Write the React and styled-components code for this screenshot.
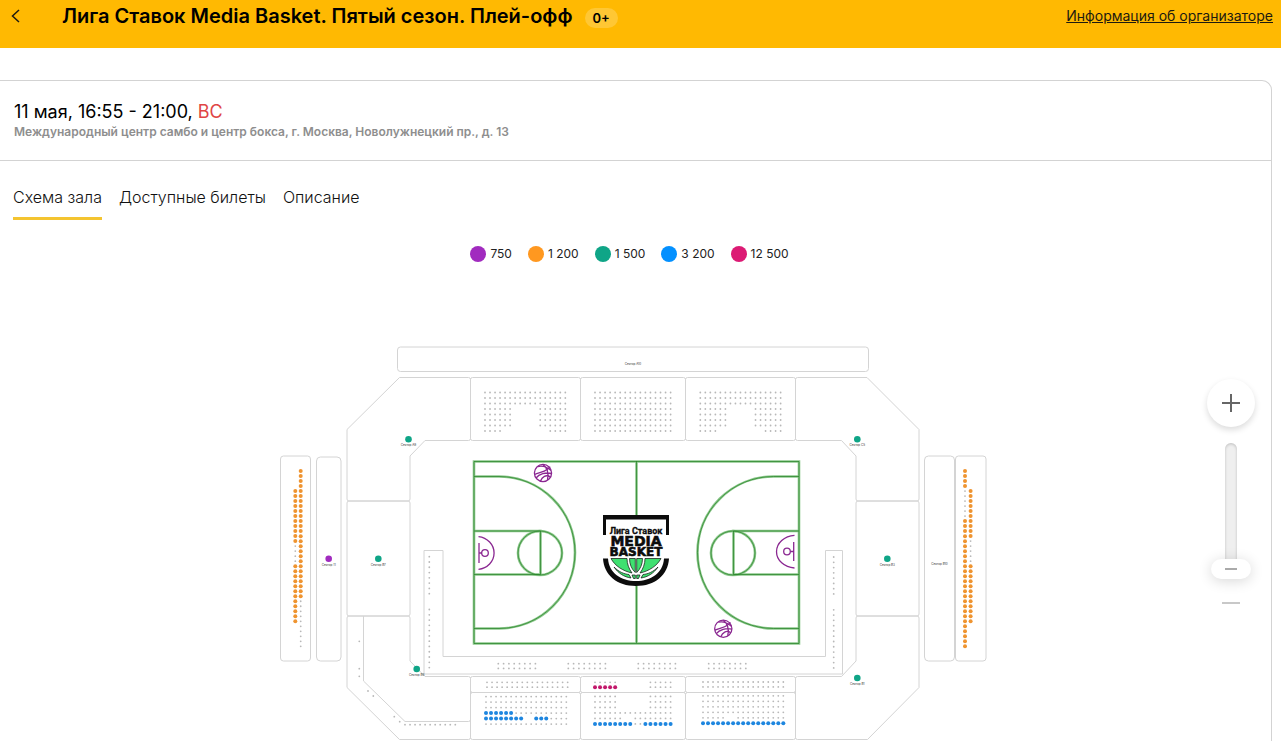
import React, { useState } from 'react';
import styled, { createGlobalStyle } from 'styled-components';

const GlobalStyle = createGlobalStyle`
  * {
    box-sizing: border-box;
  }

  body {
    margin: 0;
    background: #fff;
    color: #000;
    font-family: Inter, 'Liberation Sans', sans-serif;
  }

  button {
    font-family: inherit;
    cursor: pointer;
  }
`;

// Yellow bar at the top of the page
const Header = styled.header`
  display: flex;
  align-items: flex-start;
  height: 48px;
  padding: 4px 8px 0;
  background: #ffb902;
`;

const BackButton = styled.button`
  display: flex;
  width: 16px;
  margin-right: 38px;
  padding: 4px 0;
  border: 0;
  background: none;
`;

const Title = styled.h1`
  margin: 0;
  font-size: 20px;
  line-height: 24px;
  font-weight: 600;
`;

const AgeBadge = styled.span`
  margin: 4px 0 0 12px;
  padding: 0 8px;
  border-radius: 10px;
  background: #ffc734;
  font-size: 13px;
  line-height: 20px;
  font-weight: 600;
`;

const OrganizerLink = styled.a`
  margin-left: auto;
  color: #1d1a10;
  font-size: 14px;
  line-height: 24px;
`;

// Main container for the event
const Card = styled.main`
  min-height: calc(100vh - 80px);
  margin: 32px 9px 0 0;
  border: 1px solid #d3d3d3;
  border-width: 1px 1px 0 0;
  border-radius: 0 10px 0 0;
`;

const EventInfo = styled.section`
  height: 80px;
  padding: 20px 14px 0;
  border-bottom: 1px solid #d3d3d3;
`;

const EventDate = styled.h2`
  margin: 0;
  font-size: 18px;
  line-height: 22px;
  font-weight: 400;
`;

const Weekday = styled.span`
  color: #e04545;
`;

const Venue = styled.p`
  margin: 0;
  color: #8e8e8e;
  font-size: 12px;
  line-height: 18px;
  font-weight: 600;
`;

const Tabs = styled.nav`
  display: flex;
  gap: 17px;
  padding: 24px 13px 0;
`;

const Tab = styled.button`
  height: 35px;
  padding: 0 0 8px;
  border: 0;
  border-bottom: 3px solid ${({ $active }) => ($active ? '#f4c430' : 'transparent')};
  background: none;
  color: #111;
  font-size: 16px;
  line-height: 24px;
  font-weight: 300;
`;

// Price legend above the hall scheme
const Legend = styled.ul`
  display: flex;
  justify-content: center;
  gap: 16px;
  margin: 24px 12px 0 0;
  padding: 0;
  list-style: none;
`;

const LegendItem = styled.li`
  display: flex;
  align-items: center;
  gap: 4px;
  height: 20px;
  color: #222;
  font-size: 12px;
  line-height: 20px;
`;

const LegendDot = styled.span`
  width: 16px;
  height: 16px;
  border-radius: 50%;
  background: ${({ $color }) => $color};
`;

const Stage = styled.section`
  display: grid;
  grid-template-columns: 1fr minmax(0, 741px) 1fr;
  margin-top: 56px;
`;

const HallMap = styled.svg`
  grid-column: 2;
  display: block;
  width: 100%;
`;

// Zoom buttons and slider to the right of the scheme
const ZoomPanel = styled.div`
  display: flex;
  flex-direction: column;
  align-items: center;
  justify-self: end;
  gap: 16px;
  width: 48px;
  margin-right: 16px;
  padding-top: 59px;
`;

const ZoomIn = styled.button`
  display: flex;
  align-items: center;
  justify-content: center;
  width: 48px;
  height: 48px;
  padding: 0;
  border: 0;
  border-radius: 50%;
  background: #fff;
  box-shadow: 0 3px 6px rgba(0, 0, 0, 0.14);
`;

const ZoomOut = styled.button`
  display: flex;
  padding: 0;
  border: 0;
  background: none;
`;

const ZoomSlider = styled.input`
  appearance: none;
  writing-mode: vertical-lr;
  direction: rtl;
  width: 40px;
  height: 136px;
  margin: 0;
  background: none;

  &::-webkit-slider-runnable-track {
    width: 12px;
    height: 136px;
    border-radius: 6px;
    background: #efefef;
    box-shadow: inset 0 1px 3px rgba(0, 0, 0, 0.2);
  }

  &::-webkit-slider-thumb {
    appearance: none;
    width: 40px;
    height: 20px;
    margin-left: -14px;
    border-radius: 10px;
    background: linear-gradient(#aaa, #aaa) center / 12px 2px no-repeat #fff;
    box-shadow: 0 2px 14px rgba(0, 0, 0, 0.16);
  }
`;

const Outline = styled.g`
  fill: none;
  stroke: #d4d4d4;
  stroke-width: 1;
  stroke-linejoin: round;
`;

const SectorName = styled.text`
  fill: #333;
  font-family: Inter, sans-serif;
  font-size: 3px;
  text-anchor: middle;
`;

const LogoText = styled.text`
  fill: #0c0c0c;
  stroke: #0c0c0c;
  stroke-width: ${({ $stroke }) => $stroke};
  font-family: ${({ $family }) => $family};
  font-size: ${({ $size }) => $size}px;
  font-weight: 700;
  text-anchor: middle;
`;

const COLORS = {
  violet: '#a12bbf',
  orange: '#ff9820',
  green: '#0fa587',
  blue: '#0390ff',
  pink: '#dc1a74',
};

const PRICES = [
  { label: '750', color: COLORS.violet },
  { label: '1 200', color: COLORS.orange },
  { label: '1 500', color: COLORS.green },
  { label: '3 200', color: COLORS.blue },
  { label: '12 500', color: COLORS.pink },
];

const TABS = ['Схема зала', 'Доступные билеты', 'Описание'];

// One character per seat: "." is sold, a space is an aisle, a letter is a price
const SEAT_FILL = { o: '#ef9430', b: '#1e86df', p: '#c2186b' };

const SIDE_ROW = '.................';
const ARCH = [
  SIDE_ROW,
  SIDE_ROW,
  SIDE_ROW,
  '......     ......',
  '......     ......',
  '......     ......',
  '......     ......',
  '....         ....',
];

const SEAT_BLOCKS = [
  { x: 485, y: 392.5, dx: 5.02, dy: 5.5, rows: ARCH },
  { x: 595, y: 392.5, dx: 5.04, dy: 5.5, rows: Array(8).fill('................') },
  { x: 700.3, y: 392.5, dx: 5.02, dy: 5.5, rows: ARCH },
  { x: 487, y: 682.3, dx: 5.04, dy: 4.9, rows: [SIDE_ROW, SIDE_ROW] },
  { x: 595, y: 682.3, dx: 5.04, dy: 4.9, rows: ['.....      .....', 'ppppp      .....'] },
  { x: 703, y: 682, dx: 5.02, dy: 4.9, rows: [SIDE_ROW, SIDE_ROW] },
  {
    x: 486,
    y: 696.6,
    dx: 5.02,
    dy: 5.5,
    rows: [SIDE_ROW, SIDE_ROW, SIDE_ROW, 'bbbbbb...........', 'bbbbbbbb  bbb....', SIDE_ROW],
  },
  {
    x: 595,
    y: 696.4,
    dx: 5.04,
    dy: 5.5,
    rows: [
      '.....      .....',
      '.....      .....',
      '.....      .....',
      '................',
      '......  ........',
      'bbbbbbbb..bbbbbb',
    ],
  },
  {
    x: 703,
    y: 695.8,
    dx: 5.02,
    dy: 5.5,
    rows: [SIDE_ROW, SIDE_ROW, SIDE_ROW, SIDE_ROW, '.....  ..........', 'bbbbbbbbbbbbbbbbb'],
  },
  { x: 498.3, y: 663.7, dx: 5.3, dy: 4.7, rows: ['........', '........'] },
  { x: 568.3, y: 663.7, dx: 5.3, dy: 4.7, rows: ['........', '........'] },
  { x: 638.3, y: 663.7, dx: 5.3, dy: 4.7, rows: ['........', '........'] },
  { x: 708.7, y: 663.7, dx: 5.3, dy: 4.7, rows: ['........', '........'] },
  { x: 405, y: 724.7, dx: 5.03, dy: 5, rows: ['...........'] },
];

const SEAT_COLUMNS = [
  { x: 295.3, y: 491, dy: 5.01, seats: 'ooooooooooo....oooooooooooo' },
  { x: 300.7, y: 471, dy: 5.01, seats: 'oooooooooooooooooooooooooo..........' },
  { x: 965, y: 471, dy: 5.01, seats: 'oooo......oooooooooooooooooooooooooo' },
  { x: 970.6, y: 491, dy: 5.01, seats: 'oooooooooo.....oooooooooooo' },
  { x: 429.3, y: 556.7, dy: 5.28, seats: '........  ............' },
  { x: 833.7, y: 557, dy: 5.28, seats: '........  ............' },
];

const SINGLE_SEATS = [
  [359.3, 641.3],
  [359.3, 668.7],
  [359.3, 676.3],
  [368, 691],
  [373.3, 696],
  [394.3, 716.7],
  [399.7, 721.7],
];

const SECTORS = [
  { name: 'Сектор А9', x: 408.5, y: 439.3, color: COLORS.green },
  { name: 'Сектор С5', x: 857.3, y: 439.3, color: COLORS.green },
  { name: 'Сектор 11', x: 328.7, y: 558.7, color: COLORS.violet },
  { name: 'Сектор В7', x: 378.3, y: 558.7, color: COLORS.green },
  { name: 'Сектор В3', x: 887.3, y: 558.7, color: COLORS.green },
  { name: 'Сектор В6', x: 416.7, y: 669, color: COLORS.green },
  { name: 'Сектор В1', x: 857.3, y: 678, color: COLORS.green },
];

const Seat = ({ x, y, type }) => {
  if (type === ' ') return null;
  return type === '.' ? (
    <circle cx={x} cy={y} r="0.9" fill="#b8b8b8" />
  ) : (
    <circle cx={x} cy={y} r="2" fill={SEAT_FILL[type]} />
  );
};

const Seats = () => (
  <g>
    {SEAT_BLOCKS.map((block, blockIndex) =>
      block.rows.map((row, rowIndex) =>
        row.split('').map((type, index) => (
          <Seat
            key={`seat-${blockIndex}-${rowIndex}-${index}`}
            x={block.x + index * block.dx}
            y={block.y + rowIndex * block.dy}
            type={type}
          />
        ))
      )
    )}
    {SEAT_COLUMNS.map((column, columnIndex) =>
      column.seats.split('').map((type, index) => (
        <Seat key={`col-${columnIndex}-${index}`} x={column.x} y={column.y + index * column.dy} type={type} />
      ))
    )}
    {SINGLE_SEATS.map(([x, y]) => (
      <Seat key={`single-${x}-${y}`} x={x} y={y} type="." />
    ))}
  </g>
);

const SectorOutlines = () => (
  <Outline>
    <rect x="397.5" y="347" width="471" height="24.5" rx="3" />
    <rect x="280.5" y="456" width="30" height="205" rx="3" />
    <rect x="316.5" y="457" width="24.5" height="204" rx="4" />
    <rect x="924.5" y="456" width="30" height="205" rx="4" />
    <rect x="955.5" y="456" width="30.5" height="205" rx="3" />

    {/* Upper tribune */}
    <path d="M347 429.5 399.5 377.5H468.5q2 0 2 2V438.5q0 2-2 2H425L410 456V499q0 2-2 2H349q-2 0-2-2Z" />
    <rect x="470.5" y="377.5" width="110" height="63" rx="2" />
    <rect x="580.5" y="377.5" width="105" height="63" rx="2" />
    <rect x="685.5" y="377.5" width="110" height="63" rx="2" />
    <path d="M919 429.5 867 377.5H797.5q-2 0-2 2V438.5q0 2 2 2H841.5L856 456V499q0 2 2 2H917q2 0 2-2Z" />

    {/* Side tribunes */}
    <rect x="347" y="501" width="63" height="115" rx="2" />
    <rect x="856" y="501" width="63" height="115" rx="2" />

    {/* Lower tribune */}
    <path d="M347 618q0-2 2-2H408q2 0 2 2V661L425 676.5H468.5q2 0 2 2V737.5q0 2-2 2H399.5L347 687.5Z" />
    <path d="M363.5 616V681L405 721.5H468.5q2 0 2-2" />
    <rect x="470.5" y="676.5" width="110" height="16" rx="2" />
    <rect x="580.5" y="676.5" width="105" height="16" rx="2" />
    <rect x="685.5" y="676.5" width="110" height="16" rx="2" />
    <rect x="470.5" y="692.5" width="110" height="47" rx="2" />
    <rect x="580.5" y="692.5" width="105" height="47" rx="2" />
    <rect x="685.5" y="692.5" width="110" height="47" rx="2" />
    <path d="M919 618q0-2-2-2H858q-2 0-2 2V661L841.5 676.5H797.5q-2 0-2 2V737.5q0 2 2 2H867.5L919 687.5Z" />

    {/* Gallery around the court */}
    <path d="M424 674V550.5H443V656.5H825.5V550.5H842.5V674Z" />
  </Outline>
);

const CourtLines = () => (
  <>
    <path d="M474 461.5H799V643.5H474Z" />
    <path d="M636.5 461V515M636.5 586V643" />
    <path d="M474 476.5H499A76 76 0 0 1 499 628.5H474" />
    <path d="M799 476.5H773.5A76 76 0 0 0 773.5 628.5H799" />
    <path d="M474 531H540.5V574.5H474" />
    <path d="M799 531H733.5V574.5H799" />
    <circle cx="540" cy="553" r="22" />
    <circle cx="733" cy="553" r="22" />
  </>
);

const Ball = ({ x, y }) => (
  <g transform={`translate(${x} ${y})`}>
    <circle r="8.6" />
    <path d="M-8.5 1.500C-4-.5 1-1 4-3.500S7-6 7-5.500" />
    <path d="M-5-6.500C-1-7.500 4-6 8-2.500M0-8.500C4-6 6 0 4.500 7M-7 5C-4 1 3-1 8.500.5M-2.500 8C-1 4 3 1 7.500 4" />
  </g>
);

const Hoops = () => (
  <g fill="none" stroke="#8a2791" strokeWidth="1.3">
    <path d="M478.5 536.7A17.5 16.4 0 0 1 478.5 569.3M479 543V563M479 553H482" />
    <circle cx="485" cy="553" r="3.3" />
    <path d="M794.5 535.3A19.5 16.4 0 0 0 794.5 568M793.7 542V561M793.7 551.5H790.5" />
    <circle cx="787" cy="551.5" r="3.3" />
    <Ball x={543} y={473} />
    <Ball x={723.3} y={628.7} />
  </g>
);

const LeagueLogo = () => (
  <g>
    <path d="M603 535V515H669V535H666V519.500H606V535Z" fill="#0c0c0c" />
    <LogoText x="636" y="534" $size={9} $stroke={0.3} $family="Roboto, 'Liberation Sans', sans-serif">
      Лига Ставок
    </LogoText>
    <LogoText x="636" y="546" $size={14} $stroke={0.6} $family="'DejaVu Sans', sans-serif">
      MEDIA
    </LogoText>
    <LogoText x="636" y="556" $size={12} $stroke={0.6} $family="'DejaVu Sans', sans-serif">
      BASKET
    </LogoText>
    <path
      d="M603 558.5H608C609 573 621 581 636 581S663 573 664 558.5H669C668 575 655 586 636 586S604 575 603 558.5Z"
      fill="#0c0c0c"
    />
    {/* Half of a ball under the name */}
    <g fill="#3fe070" stroke="#0c0c0c" strokeWidth="0.7">
      <path d="M611 558.5H627C627 564 629 569 632 573C623 571 615 566 611 558.5Z" />
      <path d="M629.500 558.5H635.300V572.500C631.500 569 629.500 564 629.500 558.5Z" />
      <path d="M661 558.5H645C645 564 643 569 640 573C649 571 657 566 661 558.5Z" />
      <path d="M642.500 558.5H636.700V572.500C640.500 569 642.500 564 642.500 558.5Z" />
      <path d="M614 567C619 572 624 574 629 574.500L631 578C624 577 618 573 614 567Z" />
      <path d="M658 567C653 572 648 574 643 574.500L641 578C648 577 654 573 658 567Z" />
      <path d="M632 575H635.300V578.500H633.500ZM636.700 575H640L638.500 578.500H636.700Z" />
    </g>
  </g>
);

const HallScheme = () => (
  <HallMap viewBox="265 320 741 421" role="img" aria-label="Схема зала">
    <SectorOutlines />
    <Seats />
    <g fill="none" stroke="#8cc88c" strokeWidth="2.6">
      <CourtLines />
    </g>
    <g fill="none" stroke="#238023" strokeWidth="0.7">
      <CourtLines />
    </g>
    <Hoops />
    <LeagueLogo />
    {SECTORS.map((sector) => (
      <g key={sector.name}>
        <circle cx={sector.x} cy={sector.y} r="3.3" fill={sector.color} />
        <SectorName x={sector.x} y={sector.y + 7}>{sector.name}</SectorName>
      </g>
    ))}
    <SectorName x="633" y="365">Сектор А10</SectorName>
    <SectorName x="939.5" y="564.5">Сектор В10</SectorName>
  </HallMap>
);

const App = () => {
  const [activeTab, setActiveTab] = useState(0);
  const [zoom, setZoom] = useState(0);

  return (
    <>
      <GlobalStyle />
      <Header>
        <BackButton type="button" aria-label="Назад">
          <svg width="16" height="16" viewBox="0 0 16 16" fill="none" stroke="#1d1a10" strokeWidth="1.5">
            <path d="M11 2 4.5 8 11 14" />
          </svg>
        </BackButton>
        <Title>Лига Ставок Media Basket. Пятый сезон. Плей-офф</Title>
        <AgeBadge>0+</AgeBadge>
        <OrganizerLink href="#organizer">Информация об организаторе</OrganizerLink>
      </Header>

      <Card>
        <EventInfo>
          <EventDate>
            11 мая, 16:55 - 21:00, <Weekday>ВС</Weekday>
          </EventDate>
          <Venue>Международный центр самбо и центр бокса, г. Москва, Новолужнецкий пр., д. 13</Venue>
        </EventInfo>

        <Tabs>
          {TABS.map((tab, index) => (
            <Tab key={tab} type="button" $active={index === activeTab} onClick={() => setActiveTab(index)}>
              {tab}
            </Tab>
          ))}
        </Tabs>

        <Legend>
          {PRICES.map((price) => (
            <LegendItem key={price.label}>
              <LegendDot $color={price.color} />
              {price.label}
            </LegendItem>
          ))}
        </Legend>

        <Stage>
          <HallScheme />
          <ZoomPanel>
            <ZoomIn type="button" aria-label="Увеличить" onClick={() => setZoom(Math.min(100, zoom + 10))}>
              <svg width="18" height="18" viewBox="0 0 18 18" stroke="#666" strokeWidth="2">
                <path d="M9 0V18M0 9H18" />
              </svg>
            </ZoomIn>
            <ZoomSlider
              type="range"
              min="0"
              max="100"
              value={zoom}
              aria-label="Масштаб"
              onChange={(event) => setZoom(Number(event.target.value))}
            />
            <ZoomOut type="button" aria-label="Уменьшить" onClick={() => setZoom(Math.max(0, zoom - 10))}>
              <svg width="18" height="16" viewBox="0 0 18 16" stroke="#c8c8c8" strokeWidth="2">
                <path d="M0 8H18" />
              </svg>
            </ZoomOut>
          </ZoomPanel>
        </Stage>
      </Card>
    </>
  );
};

export default App;
